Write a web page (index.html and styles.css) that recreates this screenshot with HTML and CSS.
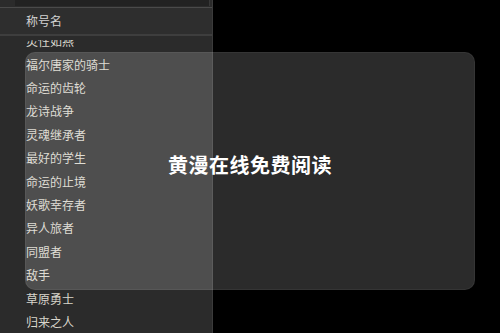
FILE: index.html
```html
<html lang="zh">
<head>
    <meta charset="UTF-8">
    <meta name="viewport" content="width=device-width, initial-scale=1.0">
    <title>称号</title>
    <link rel="stylesheet" href="styles.css">
</head>
<body>

    <div class="panel">
        <div class="top"><div class="top-box"></div></div>
        <div class="head">称号名</div>
        <div class="list">
            <ul class="items">
                <li>灵性如燕</li>
                <li>福尔唐家的骑士</li>
                <li>命运的齿轮</li>
                <li>龙诗战争</li>
                <li>灵魂继承者</li>
                <li>最好的学生</li>
                <li>命运的止境</li>
                <li>妖歌幸存者</li>
                <li>异人旅者</li>
                <li>同盟者</li>
                <li>敌手</li>
                <li>草原勇士</li>
                <li>归来之人</li>
            </ul>
        </div>
    </div>

    <!-- 弹出提示 -->
    <div class="toast">黄漫在线免费阅读</div>

</body>
</html>
```

FILE: styles.css
```css
body {
    margin: 0;
    width: 500px;
    height: 333px;
    overflow: hidden;
    background: #000;
    font-family: "Noto Sans CJK SC", "Noto Sans", sans-serif;
    position: relative;
}

.panel {
    width: 212px;
    height: 333px;
    background: #2b2b2b;
    border-right: 1px solid #3b3b3b;
    display: flex;
    flex-direction: column;
}

.top {
    height: 7px;
    border-bottom: 1px solid #4a4a4a;
}

.top-box {
    margin-left: 15px;
    width: 194px;
    height: 6px;
    background: #222;
    border-right: 1px solid #383838;
}

.head {
    height: 26px;
    line-height: 26px;
    padding-left: 26px;
    font-size: 12px;
    color: #d2d2d2;
    background: #2e2e2e;
    border-bottom: 2px solid #3e3e3e;
}

.list {
    flex: 1;
    margin-top: 4px;
    overflow: hidden;
}

/* 列表已向下滚动，第一行被遮住一半 */
.items {
    list-style: none;
    margin: -10.7px 0 0;
    padding: 0;
}

.items li {
    height: 23.4px;
    line-height: 23.4px;
    padding-left: 26px;
    font-size: 12px;
    color: #d9d6cc;
}

.toast {
    position: absolute;
    left: 25px;
    top: 52px;
    width: 450px;
    height: 238px;
    border-radius: 10px;
    background: rgba(255, 255, 255, 0.17);
    border: 1px solid rgba(255, 255, 255, 0.05);
    display: flex;
    align-items: center;
    justify-content: center;
    color: #fff;
    font-size: 20px;
    font-weight: bold;
    letter-spacing: 0.5px;
    padding-bottom: 13px;
    box-sizing: border-box;
}
```
